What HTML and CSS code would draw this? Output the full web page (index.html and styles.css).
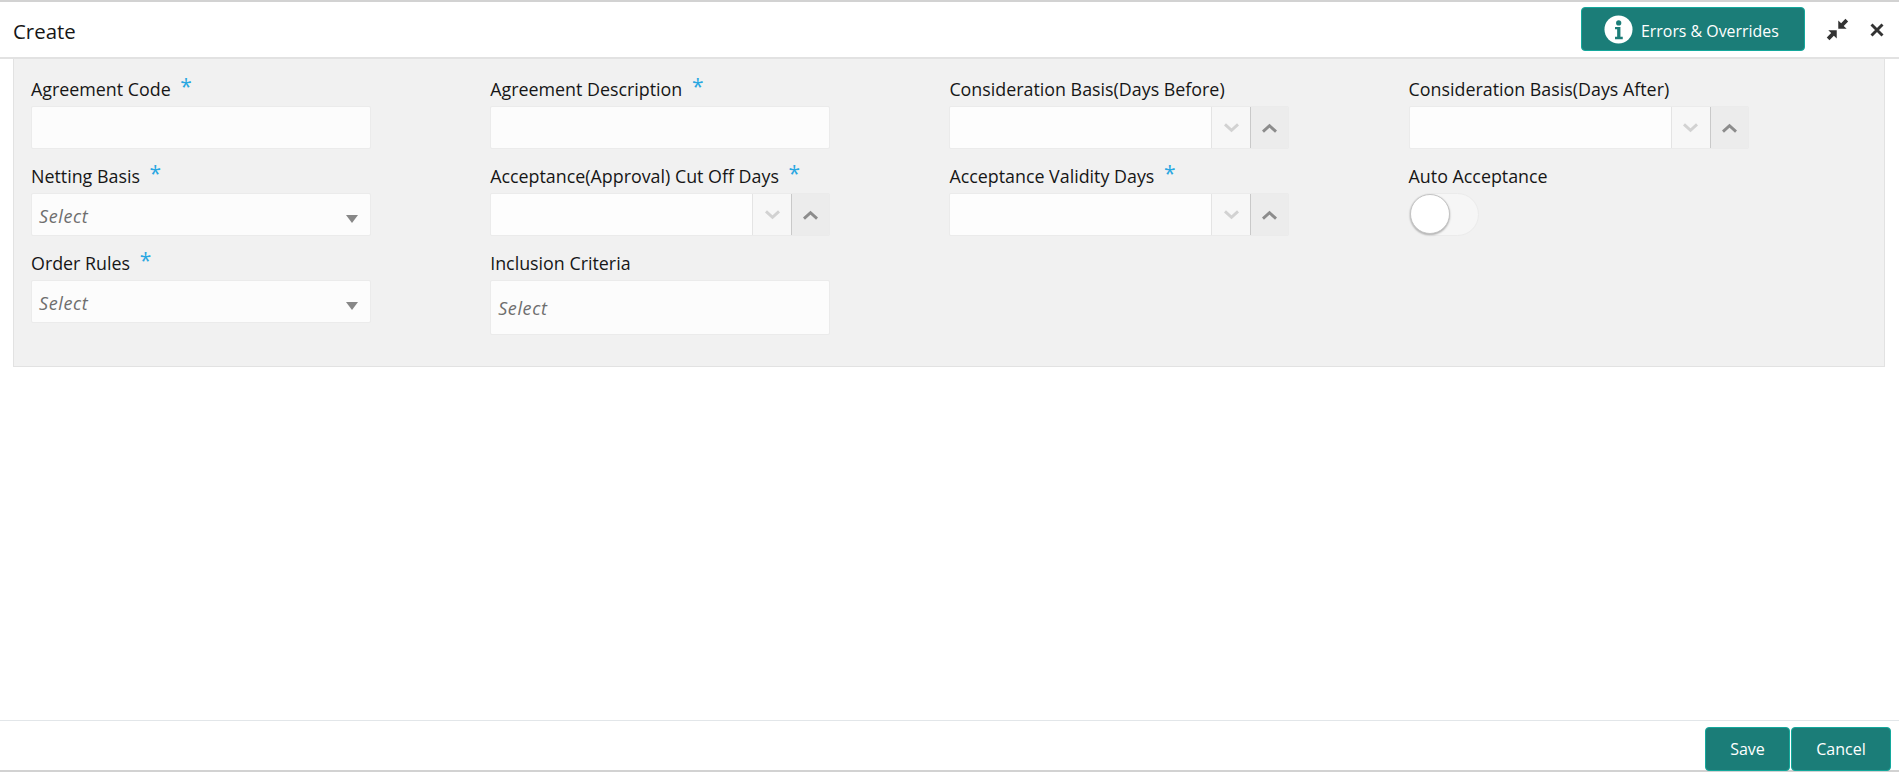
FILE: index.html
```html
<!DOCTYPE html>
<html lang="en">
<head>
<meta charset="utf-8">
<title>Create</title>
<link rel="stylesheet" href="styles.css">
</head>
<body>
<div class="window">
  <header class="header">
    <h1 class="title">Create</h1>
    <button class="btn errors" type="button">
      <svg class="info" viewBox="0 0 30 30" aria-hidden="true"><circle cx="15" cy="15" r="14.5" fill="#fff"/><circle cx="15.2" cy="8.2" r="2.7" fill="#1b7d78"/><path d="M11.4 12.4h5.6v10.2h2.4v2.4h-8v-2.4h2.2v-7.8h-2.2z" fill="#1b7d78"/></svg>
      <span>Errors &amp; Overrides</span>
    </button>
    <button class="icon-btn compress" type="button" aria-label="Minimize">
      <svg viewBox="0 0 24 24"><path d="M12.8 11.2V2.5l3 3L20.3.9l2.8 2.8-4.6 4.6 3 3zM11.2 12.8v8.7l-3-3-4.6 4.6-2.8-2.8 4.6-4.6-3-3z" fill="#333"/></svg>
    </button>
    <button class="icon-btn close" type="button" aria-label="Close">
      <svg viewBox="0 0 14 14"><path d="M1.5 1.5 12.5 12.5M12.5 1.5 1.5 12.5" stroke="#333" stroke-width="2.9" fill="none"/></svg>
    </button>
  </header>
  <main class="content">
    <form class="panel">
      <div class="field">
        <label class="label">Agreement Code <span class="req">*</span></label>
        <div class="box"></div>
      </div>
      <div class="field">
        <label class="label">Agreement Description <span class="req">*</span></label>
        <div class="box"></div>
      </div>
      <div class="field">
        <label class="label">Consideration Basis(Days Before)</label>
        <div class="box spin"><div class="spin-input"></div><span class="spin-down"><svg viewBox="0 0 14 9"><path d="M.9 1.2 7 6.6l6.1-5.4" fill="none" stroke="#d2d2d2" stroke-width="2.8"/></svg></span><span class="spin-up"><svg viewBox="0 0 14 9"><path d="M.9 7.8 7 2.4l6.1 5.4" fill="none" stroke="#8c8c8c" stroke-width="2.8"/></svg></span></div>
      </div>
      <div class="field">
        <label class="label">Consideration Basis(Days After)</label>
        <div class="box spin"><div class="spin-input"></div><span class="spin-down"><svg viewBox="0 0 14 9"><path d="M.9 1.2 7 6.6l6.1-5.4" fill="none" stroke="#d2d2d2" stroke-width="2.8"/></svg></span><span class="spin-up"><svg viewBox="0 0 14 9"><path d="M.9 7.8 7 2.4l6.1 5.4" fill="none" stroke="#8c8c8c" stroke-width="2.8"/></svg></span></div>
      </div>

      <div class="field">
        <label class="label">Netting Basis <span class="req">*</span></label>
        <div class="box select"><span class="placeholder">Select</span><span class="caret"></span></div>
      </div>
      <div class="field">
        <label class="label">Acceptance(Approval) Cut Off Days <span class="req">*</span></label>
        <div class="box spin"><div class="spin-input"></div><span class="spin-down"><svg viewBox="0 0 14 9"><path d="M.9 1.2 7 6.6l6.1-5.4" fill="none" stroke="#d2d2d2" stroke-width="2.8"/></svg></span><span class="spin-up"><svg viewBox="0 0 14 9"><path d="M.9 7.8 7 2.4l6.1 5.4" fill="none" stroke="#8c8c8c" stroke-width="2.8"/></svg></span></div>
      </div>
      <div class="field">
        <label class="label">Acceptance Validity Days <span class="req">*</span></label>
        <div class="box spin"><div class="spin-input"></div><span class="spin-down"><svg viewBox="0 0 14 9"><path d="M.9 1.2 7 6.6l6.1-5.4" fill="none" stroke="#d2d2d2" stroke-width="2.8"/></svg></span><span class="spin-up"><svg viewBox="0 0 14 9"><path d="M.9 7.8 7 2.4l6.1 5.4" fill="none" stroke="#8c8c8c" stroke-width="2.8"/></svg></span></div>
      </div>
      <div class="field">
        <label class="label">Auto Acceptance</label>
        <div class="switch"><span class="knob"></span></div>
      </div>

      <div class="field">
        <label class="label">Order Rules <span class="req">*</span></label>
        <div class="box select"><span class="placeholder">Select</span><span class="caret"></span></div>
      </div>
      <div class="field">
        <label class="label">Inclusion Criteria</label>
        <div class="box tall"><span class="placeholder">Select</span></div>
      </div>
    </form>
  </main>
  <footer class="footer">
    <button class="btn save" type="button">Save</button>
    <button class="btn cancel" type="button">Cancel</button>
  </footer>
</div>
</body>
</html>
```
FILE: styles.css
```css
* { box-sizing: border-box; }
html, body { margin: 0; height: 100%; }
body { font-family: "Open Sans", "Noto Sans", sans-serif; color: #161616; background: #fff; overflow: hidden; }
.window { height: 772px; display: flex; flex-direction: column; border-top: 2px solid #d2d2d2; border-bottom: 2px solid #d2d2d2; }
.header { height: 57px; flex: none; display: flex; align-items: center; padding: 0 14px 0 13px; border-bottom: 2px solid #e2e2e2; }
.title { margin: 3px auto 0 0; font-size: 20.4px; font-weight: 400; line-height: 28px; }
.btn { font-family: inherit; color: #fff; background: #1b7d78; border: 1px solid #14a89c; border-radius: 4px; padding: 0; cursor: pointer; }
.errors { width: 224px; height: 44px; font-size: 15.9px; display: flex; align-items: center; padding: 0 0 0 22px; gap: 8px; margin-top: -1px; }
.errors span { margin-top: 3px; }
.info { width: 29px; height: 29px; flex: none; }
.icon-btn { background: none; border: 0; padding: 0; display: block; cursor: pointer; }
.icon-btn svg { display: block; }
.compress { width: 23px; height: 23px; margin-left: 21px; }
.compress svg { width: 23px; height: 23px; }
.close { width: 14px; height: 14px; margin-left: 21px; margin-right: 1px; }
.close svg { width: 14px; height: 14px; }
.content { flex: 1; padding: 0 14px 0 13px; min-height: 0; }
.panel { height: 308px; background: #f1f1f1; border: 1px solid #e2e2e2; border-top: 0; padding: 17px 0 0 17px; display: grid; grid-template-columns: repeat(4, 459.2px); grid-auto-rows: 87px; }
.field { display: flex; flex-direction: column; }
.label { display: block; font-size: 17.85px; line-height: 26px; height: 30px; white-space: nowrap; }
.req { color: #29a7e1; font-size: 21px; line-height: 20px; position: relative; top: -2.5px; margin-left: 5px; }
.box { width: 340px; height: 43px; background: #fcfcfc; border: 1px solid #ebebeb; border-radius: 2px; flex: none; }
.tall { height: 55px; display: flex; align-items: center; padding-left: 7px; }
.select { display: flex; align-items: center; padding: 3px 12px 0 7px; justify-content: space-between; }
.placeholder { font-style: italic; font-size: 18px; letter-spacing: .6px; color: #6e6e6e; }
.caret { width: 0; height: 0; border-left: 6.5px solid transparent; border-right: 6.5px solid transparent; border-top: 8px solid #878787; margin-top: 6px; }
.spin { display: flex; background: transparent; overflow: hidden; }
.spin-input { flex: 1; background: #fdfdfd; }
.spin-down, .spin-up { display: flex; align-items: center; justify-content: center; }
.spin-down { width: 39px; background: #f7f7f7; border-left: 1px solid #e4e4e4; }
.spin-up { width: 38px; background: #ececec; border-left: 1px solid #c9c9c9; }
.spin svg { width: 15px; height: 10px; display: block; }
.switch { width: 70px; height: 43px; border: 1px solid #ebebeb; border-radius: 22px; background: #f6f6f6; position: relative; }
.knob { position: absolute; left: 0; top: 0; width: 40px; height: 40px; border-radius: 50%; background: #fff; border: 1px solid #c4c4c4; box-shadow: 0 1px 2px rgba(0,0,0,.3); }
.footer { height: 50px; flex: none; border-top: 1px solid #e2e6e9; display: flex; justify-content: flex-end; align-items: flex-start; padding: 6px 8px 0 0; gap: 1px; }
.save, .cancel { font-size: 16px; height: 44px; }
.save { width: 85px; }
.cancel { width: 100px; }
```
